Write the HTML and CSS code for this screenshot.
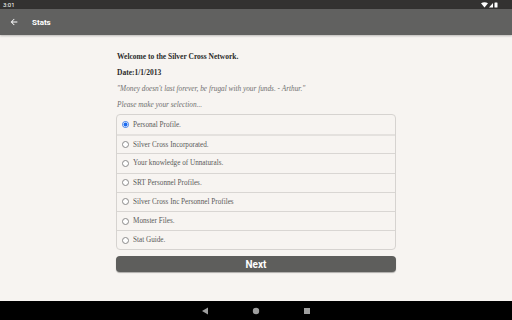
FILE: index.html
```html
<!DOCTYPE html>
<html lang="en">
<head>
    <meta charset="UTF-8">
    <title>Stats</title>
    <link rel="stylesheet" href="styles.css">
</head>
<body>
    <div class="screen">
        <!-- Status bar -->
        <div class="status-bar">
            <span class="clock">3:01</span>
            <span class="status-icons">
                <svg width="18" height="6" viewBox="0 0 18 6">
                    <path d="M0 1.2 Q3.5 -0.6 7 1.2 L3.5 5.6 Z" fill="#fff"/>
                    <path d="M8 5.6 L12 1 L12 5.6 Z" fill="#fff"/>
                    <rect x="13.5" y="0.6" width="3" height="5" rx="0.5" fill="#fff"/>
                </svg>
            </span>
        </div>

        <!-- Toolbar -->
        <div class="toolbar">
            <svg class="back" width="10" height="10" viewBox="0 0 24 24">
                <path d="M20 11H7.8l5.6-5.6L12 4l-8 8 8 8 1.4-1.4L7.8 13H20z" fill="#fff"/>
            </svg>
            <span class="title">Stats</span>
        </div>

        <!-- Content -->
        <div class="content">
            <div class="panel">
                <p class="line bold">Welcome to the Silver Cross Network.</p>
                <p class="line bold">Date:1/1/2013</p>
                <p class="line quote">"Money doesn't last forever, be frugal with your funds. - Arthur."</p>
                <p class="line quote">Please make your selection...</p>

                <div class="options">
                    <label class="option checked"><span class="radio"></span>Personal Profile.</label>
                    <label class="option"><span class="radio"></span>Silver Cross Incorporated.</label>
                    <label class="option"><span class="radio"></span>Your knowledge of Unnaturals.</label>
                    <label class="option"><span class="radio"></span>SRT Personnel Profiles.</label>
                    <label class="option"><span class="radio"></span>Silver Cross Inc Personnel Profiles</label>
                    <label class="option"><span class="radio"></span>Monster Files.</label>
                    <label class="option"><span class="radio"></span>Stat Guide.</label>
                </div>

                <button class="next">Next</button>
            </div>
        </div>

        <!-- Navigation bar -->
        <div class="nav-bar">
            <svg width="8" height="8" viewBox="0 0 8 8"><path d="M7 0.5 V7.5 L1 4 Z" fill="#9e9e9e"/></svg>
            <svg width="8" height="8" viewBox="0 0 8 8"><circle cx="4" cy="4" r="3.2" fill="#9e9e9e"/></svg>
            <svg width="8" height="8" viewBox="0 0 8 8"><rect x="1" y="1" width="6" height="6" fill="#9e9e9e"/></svg>
        </div>
    </div>
</body>
</html>
```

FILE: styles.css
```css
/* Reset */
* {
    box-sizing: border-box;
    margin: 0;
    padding: 0;
}

body {
    width: 512px;
    height: 320px;
    overflow: hidden;
    background: #f7f4f1;
    font-family: "Liberation Serif", serif;
}

.screen {
    display: flex;
    flex-direction: column;
    height: 320px;
}

/* Status bar */
.status-bar {
    height: 9px;
    background: #333231;
    color: #fff;
    display: flex;
    align-items: center;
    justify-content: space-between;
    padding: 0 13px 0 3px;
    font-family: Roboto, sans-serif;
    font-size: 6px;
}

.status-icons {
    display: flex;
}

/* Toolbar */
.toolbar {
    height: 26px;
    background: #616160;
    display: flex;
    align-items: center;
    padding-left: 9px;
    box-shadow: 0 1px 2px rgba(0, 0, 0, 0.25);
    position: relative;
}

.toolbar .back {
    margin-right: 13px;
}

.toolbar .title {
    color: #fff;
    font-family: Roboto, sans-serif;
    font-weight: bold;
    font-size: 8px;
}

/* Content */
.content {
    flex: 1;
    display: flex;
    justify-content: center;
}

.panel {
    width: 280px;
    padding-top: 14px;
}

.line {
    font-size: 7.5px;
    line-height: 16px;
    padding-left: 1px;
    color: #2b2b2b;
}

.bold {
    font-weight: bold;
}

.quote {
    font-style: italic;
    font-size: 7.3px;
    color: #707070;
}

.options {
    margin-top: 1px;
    border: 1px solid #d6d3d0;
    border-radius: 4px;
    display: flex;
    flex-direction: column;
}

.option {
    height: 19.2px;
    display: flex;
    align-items: center;
    padding-left: 5px;
    font-size: 7.2px;
    color: #5a5a5a;
    border-top: 1px solid #d9d6d3;
}

.option:first-child {
    border-top: none;
}

.option.checked + .option {
    border-top: 2px solid #e4e1de;
}

.radio {
    width: 7px;
    height: 7px;
    border: 1px solid #8a8a8a;
    border-radius: 50%;
    background: #fff;
    margin-right: 4px;
    flex-shrink: 0;
}

.checked .radio {
    border-color: #3d7ce8;
    background: radial-gradient(circle, #1a6bf0 0 1.8px, #fff 2.2px);
}

.next {
    display: block;
    width: 100%;
    height: 16px;
    margin-top: 6px;
    border: none;
    border-radius: 4px;
    background: #5e5e5c;
    color: #fff;
    font-family: Roboto, sans-serif;
    font-weight: bold;
    font-size: 10px;
    box-shadow: 0 1px 1px rgba(0, 0, 0, 0.3);
}

/* Navigation bar */
.nav-bar {
    height: 19px;
    background: #000;
    display: flex;
    align-items: center;
    justify-content: center;
    gap: 43px;
}
```
